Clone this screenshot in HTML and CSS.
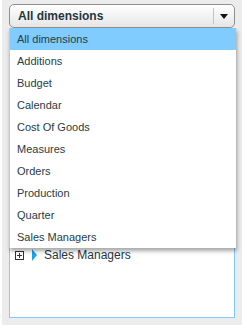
FILE: index.html
```html
<!DOCTYPE html>
<html lang="en">
<head>
  <meta charset="UTF-8" />
  <title>Dimensions</title>
  <link rel="stylesheet" href="styles.css">
</head>
<body>

<div class="panel">
  <div class="combo">
    <span class="combo-text">All dimensions</span>
    <span class="combo-btn"><span class="arrow"></span></span>

    <ul class="dropdown">
      <li class="selected">All dimensions</li>
      <li>Additions</li>
      <li>Budget</li>
      <li>Calendar</li>
      <li>Cost Of Goods</li>
      <li>Measures</li>
      <li>Orders</li>
      <li>Production</li>
      <li>Quarter</li>
      <li>Sales Managers</li>
    </ul>
  </div>

  <div class="tree">
    <div class="node"><span class="plus"></span><span class="tri"></span>Sales Managers</div>
  </div>
</div>

</body>
</html>
```

FILE: styles.css
```css
body {
  margin: 0;
  background: #fff;
  font-family: 'Liberation Sans', Arial, sans-serif;
  color: #24363f;
}
.panel {
  width: 240px;
  height: 325px;
  margin-left: 2px;
  background: #ececec;
  padding: 4px 0 0 7px;
  box-sizing: border-box;
}
.combo {
  position: relative;
  width: 226px;
  height: 24px;
  box-sizing: border-box;
  border: 1px solid #8f8f8f;
  border-radius: 5px;
  background: linear-gradient(#ffffff, #e6e6e6);
  display: flex;
  align-items: center;
}
.combo-text {
  flex: 1;
  padding-left: 8px;
  font-size: 12px;
  font-weight: bold;
  color: #1e3640;
}
.combo-btn {
  width: 20px;
  height: 16px;
  border-left: 1px solid #c4c4c4;
  display: flex;
  align-items: center;
  justify-content: center;
}
.arrow {
  width: 0;
  height: 0;
  border-left: 4px solid transparent;
  border-right: 4px solid transparent;
  border-top: 5px solid #111;
}
.dropdown {
  position: absolute;
  left: -1px;
  top: 23px;
  width: 226px;
  margin: 0;
  padding: 0;
  list-style: none;
  background: #fff;
  border-left: 1px solid #c8c8c8;
  box-shadow: 1px 3px 4px rgba(0,0,0,0.35);
  z-index: 2;
}
.dropdown li {
  height: 22px;
  line-height: 22px;
  padding-left: 7px;
  font-size: 11px;
  color: #2a3c45;
}
.dropdown li.selected {
  background: #80cbff;
}
.tree {
  width: 226px;
  height: 285px;
  margin-top: 5px;
  box-sizing: border-box;
  border: 1px solid #7fcbff;
  background: #fff;
  padding-top: 211px;
}
.node {
  height: 20px;
  display: flex;
  align-items: center;
  font-size: 12px;
  color: #24363f;
}
.plus {
  width: 7px;
  height: 7px;
  border: 1px solid #333;
  margin-left: 5px;
  margin-right: 8px;
  background: linear-gradient(#333, #333) center / 5px 1px no-repeat,
              linear-gradient(#333, #333) center / 1px 5px no-repeat;
}
.tri {
  width: 0;
  height: 0;
  border-top: 6px solid transparent;
  border-bottom: 6px solid transparent;
  border-left: 5px solid #1aa3e8;
  margin-right: 7px;
}
```
